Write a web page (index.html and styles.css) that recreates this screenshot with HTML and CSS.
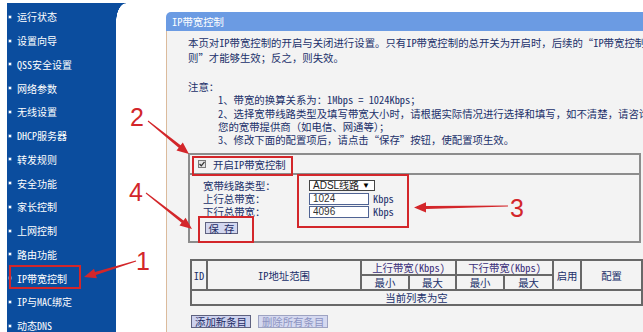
FILE: index.html
```html
<!DOCTYPE html>
<html lang="zh-CN">
<head>
    <meta charset="UTF-8">
    <meta name="viewport" content="width=device-width, initial-scale=1.0">
    <title>IP带宽控制</title>
    <link rel="stylesheet" href="styles.css">
</head>
<body>
<div class="page">
    <div class="sidebar">
        <ul class="menu">
            <li>运行状态</li>
            <li>设置向导</li>
            <li>QSS安全设置</li>
            <li>网络参数</li>
            <li>无线设置</li>
            <li>DHCP服务器</li>
            <li>转发规则</li>
            <li>安全功能</li>
            <li>家长控制</li>
            <li>上网控制</li>
            <li>路由功能</li>
            <li class="active">IP带宽控制</li>
            <li>IP与MAC绑定</li>
            <li>动态DNS</li>
        </ul>
    </div>
    <div class="gap"></div>
    <div class="panel">
        <div class="panel-title">IP带宽控制</div>
        <div class="panel-body">
            <p class="intro">本页对IP带宽控制的开启与关闭进行设置。只有IP带宽控制的总开关为开启时，后续的“IP带宽控制规<br>则”才能够生效；反之，则失效。</p>
            <div class="notes">
                <div>注意：</div>
                <div class="item">1、带宽的换算关系为：1Mbps = 1024Kbps；</div>
                <div class="item">2、选择宽带线路类型及填写带宽大小时，请根据实际情况进行选择和填写，如不清楚，请咨询</div>
                <div class="item">您的宽带提供商（如电信、网通等）；</div>
                <div class="item">3、修改下面的配置项后，请点击“保存”按钮，使配置项生效。</div>
            </div>

            <div class="fieldset">
                <div class="field-head">
                    <span class="check"><svg width="6" height="6" viewBox="0 0 6 6"><path d="M0.5 3 L2.3 4.8 L5.5 0.8" fill="none" stroke="#333" stroke-width="1.3"/></svg></span>
                    开启IP带宽控制
                </div>
                <div class="field-body">
                    <div class="form-grid">
                        <span>宽带线路类型：</span>
                        <span class="select">ADSL线路<i>▼</i></span>
                        <span>上行总带宽：</span>
                        <span class="control"><input class="text-input" value="1024"><span class="unit">Kbps</span></span>
                        <span>下行总带宽：</span>
                        <span class="control"><input class="text-input" value="4096"><span class="unit">Kbps</span></span>
                    </div>
                    <button class="btn btn-save">保 存</button>
                </div>
            </div>

            <table class="rules">
                <colgroup>
                    <col style="width:16px"><col style="width:154px">
                    <col style="width:48px"><col style="width:47px">
                    <col style="width:48px"><col style="width:49px">
                    <col style="width:28px"><col>
                </colgroup>
                <tr>
                    <th rowspan="2">ID</th>
                    <th rowspan="2">IP地址范围</th>
                    <th colspan="2" class="mark">上行带宽(Kbps)</th>
                    <th colspan="2" class="mark">下行带宽(Kbps)</th>
                    <th rowspan="2">启用</th>
                    <th rowspan="2">配置</th>
                </tr>
                <tr>
                    <th>最小</th><th>最大</th><th>最小</th><th>最大</th>
                </tr>
                <tr>
                    <td colspan="8">当前列表为空</td>
                </tr>
            </table>

            <div class="actions">
                <button class="btn">添加新条目</button>
                <button class="btn btn-disabled">删除所有条目</button>
            </div>
        </div>
    </div>

    <!-- annotations drawn over the screenshot -->
    <svg class="notes-layer" width="643" height="332" viewBox="0 0 643 332">
        <g fill="none" stroke="#d3262a" stroke-width="2">
            <rect x="10" y="266" width="70" height="22"/>
            <rect x="193" y="157" width="99" height="18"/>
            <rect x="298" y="175" width="110" height="52"/>
            <rect x="199" y="217" width="54" height="25"/>
        </g>
        <g fill="#d3262a">
            <polygon points="147.7,121.4 178.7,147.7 176.5,150.4 189,154 182.8,142.6 180.6,145.3 148.3,120.6"/>
            <polygon points="145.7,193.4 181.6,222.8 179.5,225.6 192,229 185.6,217.7 183.5,220.4 146.3,192.6"/>
            <polygon points="135.8,260.5 95.0,272.0 94.0,268.7 84,277 96.9,278.3 95.9,274.9 136.2,261.5"/>
            <polygon points="508,205.5 426,205.9 426,202.3 414,207.5 426,212.5 426,208.9 508,206.6"/>
            <text x="130" y="126" class="num">2</text>
            <text x="129" y="201" class="num">4</text>
            <text x="136" y="270" class="num">1</text>
            <text x="510" y="217" class="num">3</text>
        </g>
    </svg>
</div>
</body>
</html>
```

FILE: styles.css
```css
* {
    box-sizing: border-box;
}
body {
    margin: 0;
    width: 643px;
    height: 332px;
    overflow: hidden;
    background: #fff;
    font-family: "Noto Sans Mono CJK SC", "Noto Sans CJK SC", sans-serif;
    font-size: 10.4px;
    color: #21306a;
}
.page {
    display: flex;
    height: 332px;
    position: relative;
}
.sidebar {
    width: 109px;
    flex-shrink: 0;
    margin: 3px 0 0 7px;
    padding-top: 2px;
    background: #0b4d9e;
    position: relative;
}
.sidebar::after {
    content: "";
    position: absolute;
    top: 0;
    left: 100%;
    width: 10px;
    height: 19px;
    background: radial-gradient(ellipse 10px 19px at 100% 100%, transparent 96%, #0b4d9e 100%);
}
.menu {
    list-style: none;
    margin: 0;
    padding: 0;
}
.menu li {
    display: flex;
    align-items: center;
    height: 23.75px;
    color: #fff;
    font-size: 10px;
    white-space: nowrap;
}
.menu li::before {
    content: "";
    width: 2px;
    height: 2px;
    margin: 0 6px 0 2px;
    background: #fff;
    box-shadow: 0 0 0 0.5px rgba(255,255,255,0.6);
}
.gap {
    width: 50px;
    flex-shrink: 0;
}
.panel {
    flex: 1;
    min-width: 0;
    margin-top: 12px;
    display: flex;
    flex-direction: column;
    overflow: hidden;
}
.panel-title {
    height: 19px;
    line-height: 19px;
    padding-left: 6px;
    background: #6b9be3;
    color: #fff;
    border-top-left-radius: 5px;
}
.panel-body {
    flex: 1;
    padding: 5px 0 0 21px;
    background: #f3f3f3;
    border-left: 1px solid #dbbb9c;
}
.intro {
    margin: 0;
    line-height: 14.5px;
    white-space: nowrap;
}
.notes {
    margin-top: 15px;
    line-height: 13.3px;
    white-space: nowrap;
}
.notes .item {
    padding-left: 30px;
}
.fieldset {
    margin: 7px 2px 0 0;
    border: 2px solid #8c8c8c;
}
.field-head {
    height: 20px;
    display: flex;
    align-items: center;
    gap: 7px;
    padding-left: 8px;
    border-bottom: 2px solid #8c8c8c;
}
.check {
    width: 8px;
    height: 8px;
    display: flex;
    align-items: center;
    justify-content: center;
    border: 1px solid #7a7a7a;
    background: #e4e4e4;
}
.field-body {
    padding: 4px 0 7px 13px;
}
.form-grid {
    display: grid;
    grid-template-columns: 106px auto;
    grid-auto-rows: 13px;
    align-items: center;
}
.select {
    width: 66px;
    height: 11px;
    display: flex;
    justify-content: space-between;
    padding: 0 4px 0 3px;
    border: 1px solid #444;
    background: #fff;
    color: #222;
    font-family: "Liberation Sans", "Noto Sans CJK SC", sans-serif;
    font-size: 10px;
    line-height: 10px;
    overflow: hidden;
}
.select i {
    font-style: normal;
    font-size: 8px;
    color: #000;
}
.control {
    display: flex;
    align-items: center;
}
.text-input {
    width: 60px;
    height: 12px;
    margin: 0;
    padding: 0 3px;
    border: 1px solid #4f6393;
    background: #fff;
    color: #333;
    font-family: "Liberation Sans", sans-serif;
    font-size: 10px;
    line-height: 10px;
}
.unit {
    margin-left: 4px;
}
.btn {
    height: 13px;
    padding: 0 3px;
    border: 1px solid #5f6280;
    background: #ccd1ee;
    color: #1f2d66;
    font-family: inherit;
    font-size: 10.4px;
    line-height: 11px;
}
.btn-save {
    width: 33px;
    height: 12px;
    margin: 4px 0 0 2px;
    padding: 0;
    display: block;
    background: #d3d7ef;
}
.btn-disabled {
    color: #8d94c2;
    border-color: #9ea3c2;
    background: #d5d9f0;
}
.rules {
    width: 453px;
    margin: 16px 0 0 2px;
    border-collapse: collapse;
    table-layout: fixed;
    border: 2px solid #686868;
}
.rules th,
.rules td {
    height: 15px;
    padding: 0;
    border: 2px solid #686868;
    font-weight: normal;
    line-height: 11px;
    text-align: center;
    white-space: nowrap;
    overflow: hidden;
}
.rules .mark {
    color: #3b2f7a;
}
.actions {
    display: flex;
    gap: 7px;
    margin: 9px 0 0 3px;
}
.notes-layer {
    position: absolute;
    top: 0;
    left: 0;
    pointer-events: none;
}
.num {
    font-family: "Liberation Sans", sans-serif;
    font-size: 25px;
}
```
